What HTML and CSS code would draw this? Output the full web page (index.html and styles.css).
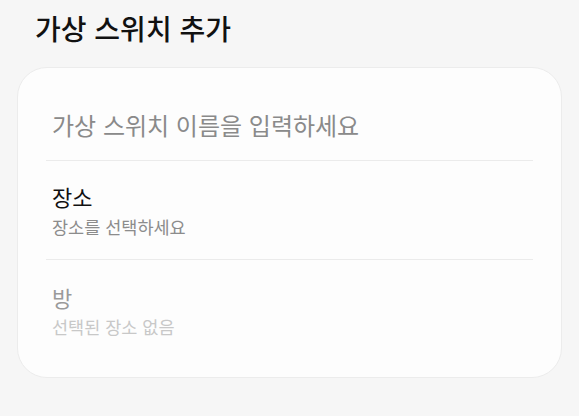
FILE: index.html
```html
<!DOCTYPE html>
<html lang="ko">
<head>
    <meta charset="UTF-8">
    <meta name="viewport" content="width=device-width, initial-scale=1.0">
    <title>가상 스위치 추가</title>
    <link rel="stylesheet" href="styles.css">
</head>
<body>
    <h1 class="page-title">가상 스위치 추가</h1>

    <div class="card">
        <div class="row name-row">
            <input class="name-input" type="text" placeholder="가상 스위치 이름을 입력하세요">
        </div>
        <div class="row pick-row">
            <div class="pick-label">장소</div>
            <div class="pick-value">장소를 선택하세요</div>
        </div>
        <div class="row pick-row disabled">
            <div class="pick-label">방</div>
            <div class="pick-value">선택된 장소 없음</div>
        </div>
    </div>
</body>
</html>
```

FILE: styles.css
```css
body {
    font-family: "Noto Sans CJK KR", "Noto Sans", sans-serif;
    margin: 0;
    background: #f6f6f6;
    color: #111;
}
.page-title {
    margin: 0;
    padding: 10px 0 0 35px;
    height: 67px;
    box-sizing: border-box;
    font-size: 28px;
    font-weight: 500;
    line-height: 36px;
}
.card {
    margin: 0 17px;
    height: 311px;
    box-sizing: border-box;
    padding: 0 28px;
    background: #fdfdfd;
    border: 1px solid #ececec;
    border-radius: 30px;
}
.row {
    padding-left: 6px;
    border-bottom: 1px solid #ebebeb;
}
.row:last-child { border-bottom: none; }
.name-row {
    padding-top: 39px;
    padding-bottom: 17px;
}
.name-input {
    width: 100%;
    border: none;
    outline: none;
    background: transparent;
    padding: 0;
    font-family: inherit;
    font-size: 24px;
    line-height: 36px;
    height: 36px;
    color: #111;
}
.name-input::placeholder { color: #8a8a8a; }
.pick-row {
    padding-top: 20px;
    padding-bottom: 20px;
}
.pick-row.disabled { padding-top: 22px; }
.pick-label {
    font-size: 22px;
    line-height: 30px;
    margin-bottom: 4px;
}
.pick-value {
    font-size: 17.5px;
    line-height: 24px;
    color: #8c8c8c;
}
.disabled .pick-label { color: #9a9a9a; margin-bottom: 3px; }
.disabled .pick-value { color: #c8c8c8; }
```
